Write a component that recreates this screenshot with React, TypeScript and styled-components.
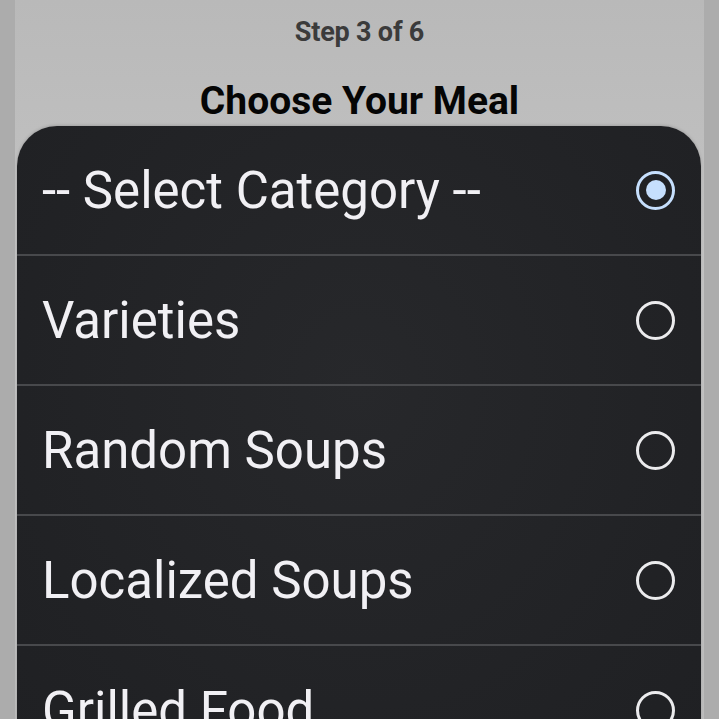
import React from "react";
import styled, { createGlobalStyle } from "styled-components";

const Global = createGlobalStyle`
  html, body { margin: 0; padding: 0; }
  body {
    background: #acacac;
    font-family: Roboto, "Noto Sans", "Liberation Sans", sans-serif;
    overflow: hidden;
  }
`;

const Screen = styled.div`
  margin-left: 15px;
  width: 689px;
  height: 719px;
  background: linear-gradient(180deg, #b9b9b9 0%, #c4c4c4 40%, #bdbdbd 100%);
  display: flex;
  flex-direction: column;
  overflow: hidden;
`;

const Header = styled.header`
  display: flex;
  flex-direction: column;
  align-items: center;
  padding-top: 17px;
`;

const Step = styled.div`
  font-size: 27px;
  line-height: 30px;
  font-weight: 700;
  color: #3b3b3b;
  letter-spacing: -0.2px;
`;

const Title = styled.h1`
  margin: 32px 0 3px;
  font-size: 39px;
  line-height: 44px;
  font-weight: 700;
  color: #050505;
  letter-spacing: 0;
`;

const Sheet = styled.div`
  margin: 0 3px 0 2px;
  flex: 1;
  background: radial-gradient(ellipse at 50% 40%, #27282b 0%, #212225 70%, #1f2023 100%);
  border-radius: 40px 40px 0 0;
  display: flex;
  flex-direction: column;
  box-shadow: 0 -1px 3px rgba(0, 0, 0, 0.15);
`;

const Option = styled.div<{ $first?: boolean }>`
  height: 128px;
  flex-shrink: 0;
  display: flex;
  align-items: center;
  justify-content: space-between;
  padding: 0 26px 0 25px;
  border-top: ${(p) => (p.$first ? "none" : "2px solid #48494c")};
`;

const Label = styled.span`
  font-size: 51px;
  color: #f1f0f4;
  font-weight: 400;
`;

const Radio = styled.span<{ $checked?: boolean }>`
  width: 39px;
  height: 39px;
  box-sizing: border-box;
  border-radius: 50%;
  border: 3.5px solid ${(p) => (p.$checked ? "#c6dffd" : "#ebebed")};
  display: flex;
  align-items: center;
  justify-content: center;
  &::after {
    content: "";
    width: 20px;
    height: 20px;
    border-radius: 50%;
    background: ${(p) => (p.$checked ? "#c6dffd" : "transparent")};
  }
`;

const options = [
  "-- Select Category --",
  "Varieties",
  "Random Soups",
  "Localized Soups",
  "Grilled Food",
];

export default function App() {
  return (
    <>
      <Global />
      <Screen>
        <Header>
          <Step>Step 3 of 6</Step>
          <Title>Choose Your Meal</Title>
        </Header>
        <Sheet>
          {options.map((o, i) => (
            <Option key={o} $first={i === 0}>
              <Label>{o}</Label>
              <Radio $checked={i === 0} />
            </Option>
          ))}
        </Sheet>
      </Screen>
    </>
  );
}
